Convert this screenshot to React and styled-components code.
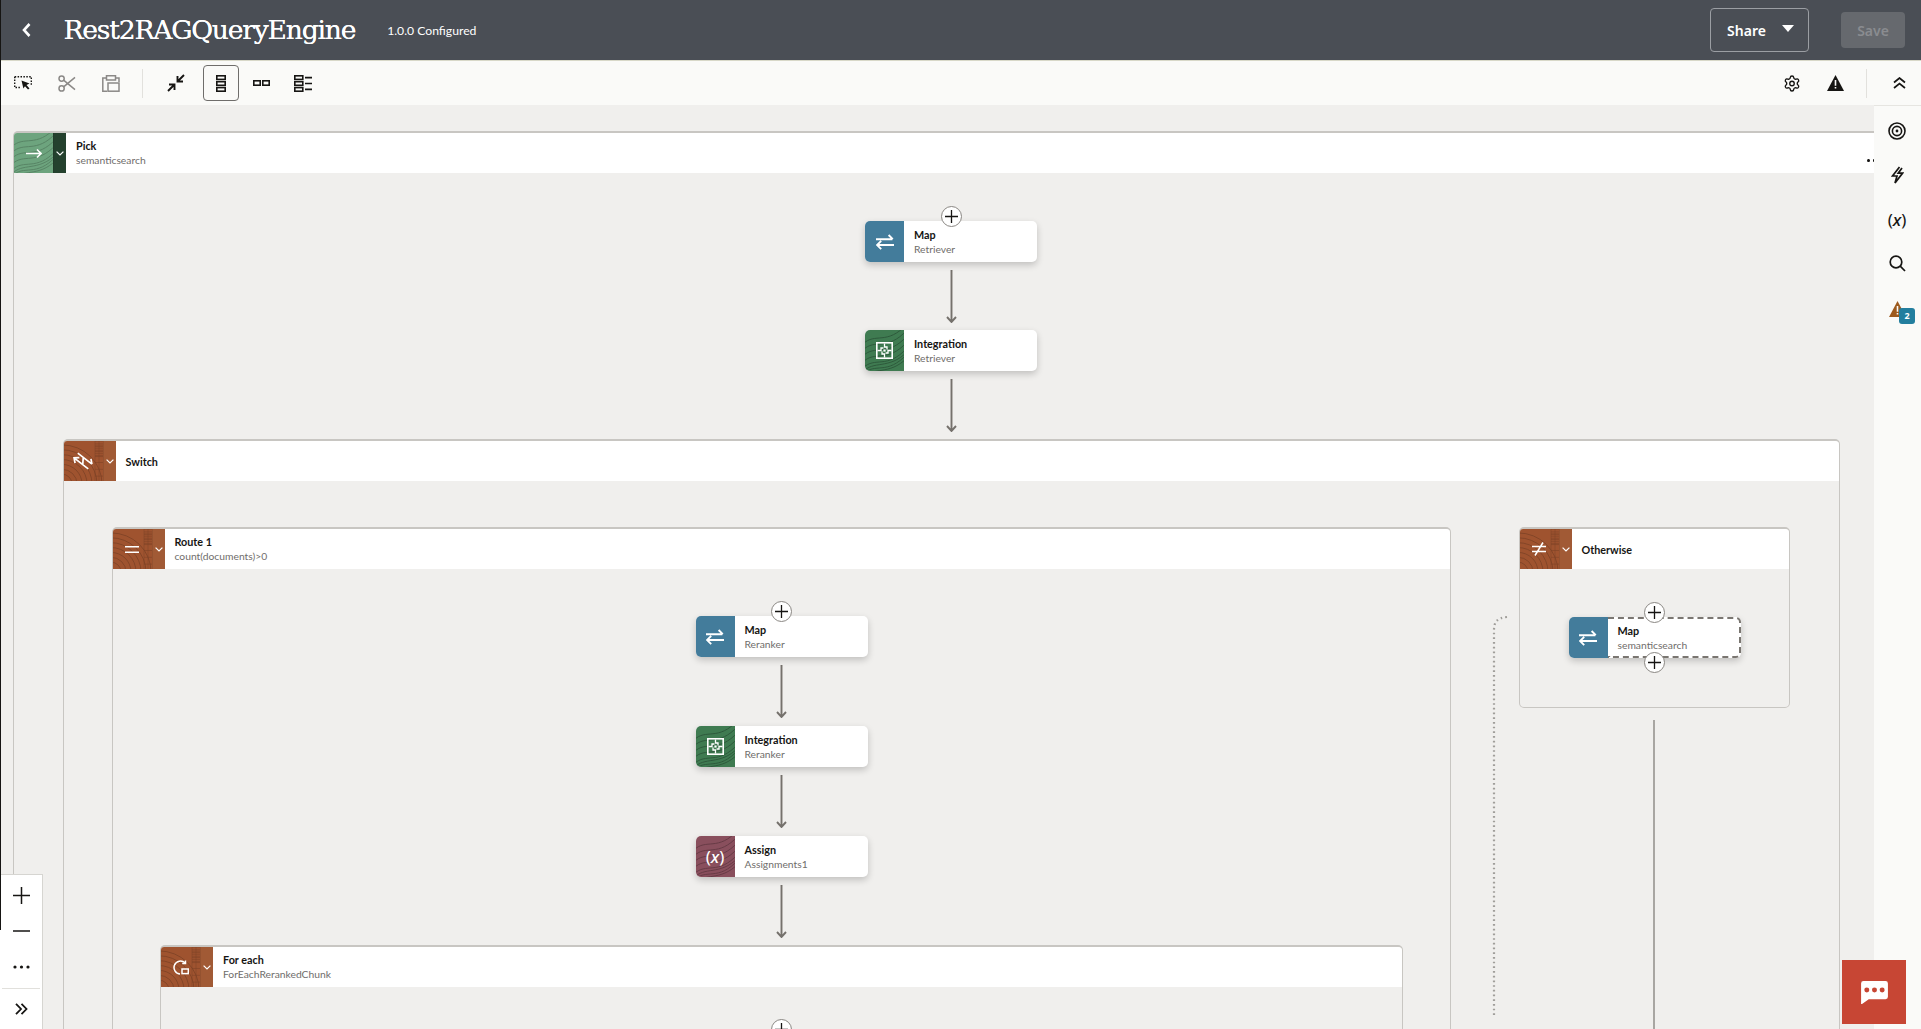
import React from "react";
import styled, { createGlobalStyle } from "styled-components";
import { Settings } from "lucide-react";

const Global = createGlobalStyle`
  html, body { margin: 0; padding: 0; height: 100%; overflow: hidden; background: #f0efed; }
  * { box-sizing: border-box; }
  #root { height: 100%; }
`;

const Page = styled.div`
  position: relative; width: 100%; height: 1029px; overflow: hidden;
  display: flex; flex-direction: column;
  font-family: "Noto Sans", "Open Sans", sans-serif; color: #161513;
  &::before { content: ""; position: absolute; z-index: 9; left: 0; top: 0; width: 1px; height: 930px; background: #161513; }
`;
const Header = styled.header`
  flex: none; height: 61px; background: #4a4e55; display: flex; align-items: center;
  padding: 0 16px 0 22px; color: #fff; border-bottom: 1px solid #d8d8c8;
`;
const BackButton = styled.span`display: flex; width: 41.5px; color: #fff;`;
const Title = styled.h1`
  margin: 0; font: 400 26.6px "DejaVu Serif", "Liberation Serif", serif; letter-spacing: -1.22px; line-height: 60px; text-shadow: 0 0 .4px #fff;
`;
const Version = styled.span`font: 400 12.2px "Lato", sans-serif; margin-left: 32px; padding-top: 1px;`;
const Spacer = styled.div`flex: 1;`;
const ShareButton = styled.button`
  width: 99px; height: 44px; border: 1px solid #9b9ea3; border-radius: 4px; background: transparent; color: #fff;
  font: 600 14px "Noto Sans", sans-serif; display: flex; align-items: center; justify-content: center; gap: 16px; padding: 0 0 0 2px;
`;
const Caret = styled.i`width: 0; height: 0; border-left: 6.5px solid transparent; border-right: 6.5px solid transparent; border-top: 7px solid #fff; margin-top: -3px;`;
const SaveButton = styled.button`
  width: 64px; height: 36px; margin-left: 32px; border: 0; border-radius: 4px; background: #66696e; color: #8a8c90;
  font: 600 14px "Noto Sans", sans-serif;
`;
const Toolbar = styled.div`
  flex: none; height: 44px; background: #fafaf8; display: flex; align-items: center; padding: 0 0 0 14px;
`;
const ToolIcon = styled.span`
  display: flex; align-items: center; justify-content: center; flex: none; width: ${p => p.$w || 44}px; height: 36px;
  margin: ${p => p.$m || "0"};
  color: ${p => p.$muted ? "#8b8987" : "#161513"};
  ${p => p.$active && "border: 1px solid #6f6d6b; border-radius: 4px;"}
`;
const ToolDivider = styled.span`flex: none; width: 1px; height: 29px; background: #e2e1dd; margin: ${p => p.$m};`;
const Canvas = styled.main`flex: 1; min-height: 0; position: relative; overflow: hidden; background: #f0efed; padding: 26px 0 0 13px;`;
const Scope = styled.section`
  position: relative; flex: none; width: ${p => p.$w}px; background: #f0efed;
  border: 1px solid #c8c6c2; border-width: 2px 1px 1px 1px; border-radius: 5px 5px ${p => p.$closed ? "5px 5px" : "0 0"};
  ${p => !p.$closed && "border-bottom: 0;"}
`;
const ScopeHead = styled.div`display: flex; align-items: stretch; height: 40px; background: #fff; border-radius: 4px 4px 0 0;`;
const ScopeTile = styled.span`
  position: relative; overflow: hidden; flex: none; width: 39px; display: flex; align-items: center; justify-content: center;
  background: ${p => p.$c}; color: #fff; border-radius: 3px 0 0 0;
`;
const ScopeToggle = styled.span`
  flex: none; width: 13px; display: flex; align-items: center; justify-content: center; color: #fff; background: ${p => p.$c};
  border-left: 1px solid rgba(0,0,0,.08);
`;
const ScopeText = styled.div`
  display: flex; flex-direction: column; justify-content: center; padding-left: 10px;
`;
const Name = styled.b`font: 700 10.8px/15px "Lato", sans-serif; color: #161513;`;
const Sub = styled.span`font: 400 10.3px/15px "Lato", sans-serif; color: #6f6d6b;`;
const ScopeBody = styled.div`
  position: relative; display: flex; flex-direction: ${p => p.$row ? "row" : "column"};
  align-items: ${p => p.$row ? "flex-start" : "center"}; gap: ${p => p.$gap || 0}px; padding: ${p => p.$pad};
`;
const Node = styled.article`
  position: relative; flex: none; width: 172px; height: 41px; background: #fff; border-radius: 5px; display: flex; align-items: stretch;
  box-shadow: 0 3px 7px rgba(0,0,0,.2);
`;
const NodeTile = styled.span`
  position: relative; overflow: hidden; flex: none; width: 39px; display: flex; align-items: center; justify-content: center; color: #fff;
  background: ${p => p.$c}; border-radius: 5px 0 0 5px;
`;
const NodeText = styled.div`
  flex: 1; display: flex; flex-direction: column; justify-content: center; padding-left: 10px;
  ${p => p.$selected && "border: 2px dashed #7a7671; border-left: 0; border-radius: 0 5px 5px 0;"}
`;
const AddButton = styled.span`
  position: absolute; z-index: 2; left: 50%; ${p => p.$bottom ? "bottom: -15px" : "top: -15.5px"}; margin-left: -10.5px; width: 21px; height: 21px; border-radius: 50%;
  background: #fff; border: 1px solid #8a8783; display: flex; align-items: center; justify-content: center; color: #161513;
`;
const Arrow = styled.svg`display: block; flex: none; margin: ${p => p.$m || "8px 0"}; color: #75716c;`;
const TileIcon = styled.svg`position: relative; display: block;`;
const AssignGlyph = styled.span`position: relative; font: 400 17px "Noto Sans", sans-serif; color: #fff; i { font-weight: 500; }`;
const Texture = styled.svg`position: absolute; inset: 0; width: 100%; height: 100%; opacity: ${p => p.$o || .22}; pointer-events: none;`;
const Column = styled.div`display: flex; flex-direction: column; align-items: center; flex: none;`;
const Trunk = styled.div`width: 2px; height: 400px; background: #a8a6a2; margin-top: 12px;`;
const DottedRoute = styled.svg`position: absolute; left: 1429px; top: 135px; overflow: visible;`;
const SideRail = styled.aside`
  position: absolute; z-index: 4; right: 0; top: 0; bottom: 0; width: 47px; background: #fafaf8; border-top: 1px solid #e6e5e1;
  display: flex; flex-direction: column; align-items: center; padding-top: 3px;
`;
const RailItem = styled.span`
  position: relative; width: 100%; height: 44px; display: flex; align-items: center; justify-content: center; flex: none; color: #161513;
  font: 400 17px "Noto Sans", sans-serif; padding-right: 1px; margin-top: ${p => p.$mt || 0}px; i { font-weight: 500; }
`;
const Badge = styled.span`
  position: absolute; right: 6px; top: 21px; min-width: 16px; height: 16px; border-radius: 3px; background: #227e9e; color: #fff;
  font: 700 9px/16px "Noto Sans", sans-serif; text-align: center;
`;
const EdgeDots = styled.span`
  position: absolute; z-index: 3; left: 1867px; top: 54px; width: 8px; height: 3px; display: flex; gap: 3px;
  &::before, &::after { content: ""; width: 3px; height: 3px; border-radius: 50%; background: #161513; }
`;
const ZoomPanel = styled.div`
  position: absolute; z-index: 5; left: 0; bottom: 0; width: 43px; height: 155px; background: #fff; border: 1px solid #d6d5d1; border-width: 1px 1px 0 0;
  display: flex; flex-direction: column; align-items: center; padding-top: 2px;
`;
const ZoomItem = styled.span`display: flex; align-items: center; justify-content: center; height: 36px; width: 100%; color: #161513; flex: none;`;
const ZoomRule = styled.span`width: 38px; height: 1px; background: #e1e0dc; margin: 3px 0 2px; flex: none;`;
const ChatButton = styled.div`
  position: absolute; z-index: 6; right: 15px; bottom: 5px; width: 64px; height: 64px;
  background: #c74634; display: flex; align-items: center; justify-content: center;
`;

const Wood = () => (
  <Texture viewBox="0 0 39 41" preserveAspectRatio="none" fill="none" stroke="#000" strokeWidth=".8">
    {[4, 9, 14, 19, 24, 29, 34].map(r => <circle key={r} cx="-2" cy="44" r={r + 6} />)}
    {[0, 5, 10].map(y => <path key={y} d={`M31 ${y}h8M31 ${y + 3}h8M31 ${y + 6}h8`} opacity=".7" />)}
    <path d="M31 0V41M35 0V41" opacity=".6" />
    {[15, 22, 29, 36].map(y => <path key={y} d={`M31 ${y}h8`} opacity=".7" />)}
  </Texture>
);
const Grain = ({ o, s = "#000" }) => (
  <Texture $o={o} viewBox="0 0 39 41" preserveAspectRatio="none" fill="none" stroke={s} strokeWidth=".9">
    {[0, 6, 12, 18, 24, 30].map(y => <path key={y} d={`M-2 ${y + 14}C10 ${y + 2} 22 ${y + 16} 42 ${y - 6}`} />)}
    {[36, 42].map(y => <path key={y} d={`M-2 ${y + 6}C8 ${y - 6} 24 ${y + 4} 42 ${y - 14}`} />)}
  </Texture>
);

const MapIcon = () => (
  <TileIcon width="18" height="16" viewBox="0 0 18 16" fill="none" stroke="#fff" strokeWidth="1.9">
    <path d="M0 5.2H16.4M12.6 1L16.8 5.2M0.8 11H18M5.2 6.8L1 11L5.2 15.2" />
  </TileIcon>
);
const IntegrationIcon = () => (
  <TileIcon width="17" height="17" viewBox="0 0 17 17" fill="none" stroke="#fff">
    <rect x=".8" y=".8" width="15.4" height="15.4" strokeWidth="1.6" />
    <path d="M8.5 1.5V5H11V7.4M15.5 8.5H12V11H9.6M8.5 15.5V12H6V9.6M1.5 8.5H5V6H7.4" strokeWidth="1.3" />
    <rect x="7.4" y="7.4" width="2.2" height="2.2" fill="#fff" stroke="none" />
  </TileIcon>
);
const Plus = () => (
  <svg width="13" height="13" viewBox="0 0 13 13" stroke="currentColor" strokeWidth="1.3"><path d="M6.5 0V13M0 6.5H13" /></svg>
);
const DownArrow = ({ m }) => (
  <Arrow $m={m} width="11" height="53" viewBox="0 0 11 53" fill="none" stroke="currentColor" strokeWidth="1.9">
    <path d="M5.5 0V52M1 47L5.5 52L10 47" />
  </Arrow>
);
const Chevron = () => (
  <svg width="8" height="5" viewBox="0 0 8 5" fill="none" stroke="currentColor" strokeWidth="1.2"><path d="M.6 .6L4 4L7.4 .6" /></svg>
);

const BLUE = "#437c9b", GREEN = "#3f7b52", PURPLE = "#8a4f5e", RUST = "#9f5430", PICK = "#6da57e";

function WorkNode({ tile, name, sub, kind, selected, addBottom, add }) {
  return (
    <Node>
      <NodeTile $c={tile}>
        {kind === "integration" && <Grain o={.3} />}
        {kind === "assign" && <Grain o={.28} />}
        {kind === "map" && <MapIcon />}
        {kind === "integration" && <IntegrationIcon />}
        {kind === "assign" && <AssignGlyph>(<i>x</i>)</AssignGlyph>}
      </NodeTile>
      <NodeText $selected={selected}>{name && <Name>{name}</Name>}{sub && <Sub>{sub}</Sub>}</NodeText>
      {add && <AddButton><Plus /></AddButton>}
      {addBottom && <AddButton $bottom><Plus /></AddButton>}
    </Node>
  );
}

function ScopeHeader({ icon, name, sub, tile = RUST, toggle = "#a15a35", wood = true }) {
  return (
    <ScopeHead>
      <ScopeTile $c={tile}>{wood ? <Wood /> : <Grain o={.22} />}{icon}</ScopeTile>
      <ScopeToggle $c={toggle}><Chevron /></ScopeToggle>
      <ScopeText><Name>{name}</Name>{sub && <Sub>{sub}</Sub>}</ScopeText>
    </ScopeHead>
  );
}

export default function App() {
  return (
    <Page>
      <Global />
      <Header>
        <BackButton><svg width="9" height="14" viewBox="0 0 9 14" fill="none" stroke="#fff" strokeWidth="2.6"><path d="M7.5 1L2 7L7.5 13" /></svg></BackButton>
        <Title>Rest2RAGQueryEngine</Title>
        <Version>1.0.0 Configured</Version>
        <Spacer />
        <ShareButton>Share<Caret /></ShareButton>
        <SaveButton>Save</SaveButton>
      </Header>
      <Toolbar>
        <ToolIcon $w={18}>
          <svg width="18" height="14" viewBox="0 0 18 14" fill="none"><path d="M.7 .7H17.3V10M.7 .7V11.5H6" stroke="#161513" strokeWidth="1.4" strokeDasharray="1.5 1.4" /><path d="M7.5 4.5L15.5 7.5L12.5 9L15.5 12.4L14 13.6L11 10.2L9.4 12.6Z" fill="#161513" /></svg>
        </ToolIcon>
        <ToolIcon $muted $m="0 0 0 26px" $w={18}>
          <svg width="18" height="17" viewBox="0 0 18 17" fill="none" stroke="currentColor" strokeWidth="1.5"><circle cx="3.6" cy="3.6" r="2.6" /><circle cx="3.6" cy="13.4" r="2.6" /><path d="M5.6 5.2L17 14.6M5.6 11.8L17 2.4" /></svg>
        </ToolIcon>
        <ToolIcon $muted $m="0 0 0 26px" $w={18}>
          <svg width="18" height="17" viewBox="0 0 18 17" fill="none" stroke="currentColor" strokeWidth="1.5"><path d="M4.5 3H.8V16.2H5M13.5 3H17V7" /><path d="M4.5 3V.8H13.5V5H4.5Z" /><rect x="6" y="8" width="11" height="8.2" /></svg>
        </ToolIcon>
        <ToolDivider $m="0 24px 0 22px" />
        <ToolIcon $w={18}>
          <svg width="18" height="18" viewBox="0 0 18 18" fill="none" stroke="#161513" strokeWidth="1.9"><path d="M17 1L10.5 7.5M10.5 2V7.5H16" /><path d="M1 17L7.5 10.5M2 10.5H7.5V16" /></svg>
        </ToolIcon>
        <ToolIcon $active $w={36} $m="0 0 0 18px">
          <svg width="10" height="17" viewBox="0 0 10 17" fill="none" stroke="#161513" strokeWidth="1.6"><rect x=".8" y=".8" width="8.4" height="3.6" /><rect x=".8" y="6.7" width="8.4" height="3.6" /><rect x=".8" y="12.6" width="8.4" height="3.6" /></svg>
        </ToolIcon>
        <ToolIcon $w={17} $m="0 0 0 14px">
          <svg width="17" height="6" viewBox="0 0 17 6" fill="none" stroke="#161513" strokeWidth="1.6"><rect x=".8" y=".8" width="6.4" height="4.4" /><rect x="9.8" y=".8" width="6.4" height="4.4" /></svg>
        </ToolIcon>
        <ToolIcon $w={18} $m="0 0 0 24px">
          <svg width="18" height="17" viewBox="0 0 18 17" fill="none" stroke="#161513" strokeWidth="1.6"><rect x=".8" y=".8" width="8" height="3.6" /><rect x=".8" y="6.7" width="8" height="3.6" /><rect x=".8" y="12.6" width="8" height="3.6" /><path d="M11 2.6H18M11 8.5H18M11 14.4H18" /></svg>
        </ToolIcon>
        <Spacer />
        <ToolIcon $w={18} $m="0 26px 0 0">
          <Settings size={21} strokeWidth={1.8} color="#161513" />
        </ToolIcon>
        <ToolIcon $w={17} $m="0 22px 0 0">
          <svg width="17" height="16" viewBox="0 0 17 16"><path d="M8.5 0L17 16H0Z" fill="#161513" /><path d="M7.7 5H9.3V10.8H7.7ZM7.7 12H9.3V13.6H7.7Z" fill="#fafaf8" /></svg>
        </ToolIcon>
        <ToolDivider $m="0" />
        <ToolIcon $w={42} $m="0 1px 0 11px">
          <svg width="13" height="12" viewBox="0 0 13 12" fill="none" stroke="#161513" strokeWidth="1.7"><path d="M1 5.5L6.5 1L12 5.5M1 11L6.5 6.5L12 11" /></svg>
        </ToolIcon>
      </Toolbar>
      <Canvas>
        <Scope $w={1876}>
          <ScopeHeader tile={PICK} toggle="#24412e" wood={false} name="Pick" sub="semanticsearch" icon={
            <TileIcon width="16" height="11" viewBox="0 0 16 11" fill="none" stroke="#fff" strokeWidth="1.6"><path d="M0 5.5H15M11 1.5L15 5.5L11 9.5" /></TileIcon>
          } />
          <ScopeBody $pad="48px 49px 0">
            <WorkNode add tile={BLUE} kind="map" name="Map" sub="Retriever" />
            <DownArrow m="8px 0 7px" />
            <WorkNode tile={GREEN} kind="integration" name="Integration" sub="Retriever" />
            <DownArrow m="8px 0 7px" />
            <Scope $w={1777}>
              <ScopeHeader name="Switch" icon={
                <TileIcon width="20" height="20" viewBox="0 0 20 20" fill="none" stroke="#fff" strokeWidth="1.7"><g transform="rotate(38 10 10)"><path d="M1 7H19M15 3.5L19 7M1 13H19M5 9.5L1 13L5 16.5M8 7L12 13" /></g></TileIcon>
              } />
              <ScopeBody $row $gap={68} $pad="46px 49px 0 48px">
                <DottedRoute width="16" height="400" fill="none" stroke="#a09e9a" strokeWidth="2.2" strokeDasharray="1.7 3"><path d="M14 1C4 2 1 6 1 14V400" /></DottedRoute>
                <Scope $w={1339}>
                  <ScopeHeader name="Route 1" sub="count(documents)>0" icon={
                    <TileIcon width="14" height="7" viewBox="0 0 14 7" stroke="#fff" strokeWidth="1.5"><path d="M0 .8H14M0 6.2H14" /></TileIcon>
                  } />
                  <ScopeBody $pad="47px 48px 0 49px">
                    <WorkNode add tile={BLUE} kind="map" name="Map" sub="Reranker" />
                    <DownArrow m="8px 0 8px" />
                    <WorkNode tile={GREEN} kind="integration" name="Integration" sub="Reranker" />
                    <DownArrow m="8px 0 8px" />
                    <WorkNode tile={PURPLE} kind="assign" name="Assign" sub="Assignments1" />
                    <DownArrow m="8px 0 7px" />
                    <Scope $w={1243}>
                      <ScopeHeader name="For each" sub="ForEachRerankedChunk" icon={
                        <TileIcon width="17" height="15" viewBox="0 0 17 15" fill="none" stroke="#fff" strokeWidth="1.5"><path d="M13 2.8A6.5 6.5 0 1 0 8 14" /><path d="M13.5 .5V3.6H10.2" /><rect x="10" y="9" width="6.3" height="4.6" /></TileIcon>
                      } />
                      <ScopeBody $pad="47px 49px 0"><WorkNode add tile={BLUE} kind="map" /></ScopeBody>
                    </Scope>
                  </ScopeBody>
                </Scope>
                <Column>
                  <Scope $w={271} $closed>
                    <ScopeHeader name="Otherwise" icon={
                      <TileIcon width="14" height="14" viewBox="0 0 14 14" fill="none" stroke="#fff" strokeWidth="1.5"><path d="M0 4.5H14M0 9.5H14M11 .5L3 13.5" /></TileIcon>
                    } />
                    <ScopeBody $pad="48px 48px 49px 49px">
                      <WorkNode add addBottom selected tile={BLUE} kind="map" name="Map" sub="semanticsearch" />
                    </ScopeBody>
                  </Scope>
                  <Trunk />
                </Column>
              </ScopeBody>
            </Scope>
          </ScopeBody>
        </Scope>
        <EdgeDots />
        <SideRail>
          <RailItem><svg width="18" height="18" viewBox="0 0 18 18" fill="none" stroke="#161513" strokeWidth="1.6"><circle cx="9" cy="9" r="8" /><circle cx="9" cy="9" r="4.6" /><circle cx="9" cy="9" r="1.4" fill="#161513" stroke="none" /></svg></RailItem>
          <RailItem><svg width="13" height="18" viewBox="0 0 13 18" fill="none" stroke="#161513" strokeWidth="1.7"><path d="M8.5 1L1.5 10H6L4 17L11.5 7.2H7.2L11 2" /></svg></RailItem>
          <RailItem>(<i>x</i>)</RailItem>
          <RailItem><svg width="17" height="17" viewBox="0 0 17 17" fill="none" stroke="#161513" strokeWidth="1.7"><circle cx="7" cy="7" r="5.8" /><path d="M11.2 11.2L16 16" /></svg></RailItem>
          <RailItem $mt={2}>
            <svg width="17" height="16" viewBox="0 0 17 16"><path d="M8.5 0L17 16H0Z" fill="#9c5a1e" /><path d="M7.7 5H9.3V10.8H7.7ZM7.7 12H9.3V13.6H7.7Z" fill="#fafaf8" /></svg>
            <Badge>2</Badge>
          </RailItem>
        </SideRail>
        <ZoomPanel>
          <ZoomItem><svg width="17" height="17" viewBox="0 0 17 17" stroke="#161513" strokeWidth="1.5"><path d="M8.5 0V17M0 8.5H17" /></svg></ZoomItem>
          <ZoomItem><svg width="17" height="2" viewBox="0 0 17 2" stroke="#161513" strokeWidth="1.5"><path d="M0 1H17" /></svg></ZoomItem>
          <ZoomItem><svg width="17" height="4" viewBox="0 0 17 4" fill="#161513"><circle cx="2" cy="2" r="1.6" /><circle cx="8.5" cy="2" r="1.6" /><circle cx="15" cy="2" r="1.6" /></svg></ZoomItem>
          <ZoomRule />
          <ZoomItem><svg width="13" height="12" viewBox="0 0 13 12" fill="none" stroke="#161513" strokeWidth="1.8"><path d="M1 .8L6 6L1 11.2M6.5 .8L11.5 6L6.5 11.2" /></svg></ZoomItem>
        </ZoomPanel>
        <ChatButton>
          <svg width="27" height="23" viewBox="0 0 28 24"><path d="M2.5 0H25.5A2.5 2.5 0 0 1 28 2.5V16.5A2.5 2.5 0 0 1 25.5 19H8L1 24H0V2.5A2.5 2.5 0 0 1 2.5 0Z" fill="#fff" /><circle cx="6" cy="9.5" r="2.6" fill="#c74634" /><circle cx="14" cy="9.5" r="2.6" fill="#c74634" /><circle cx="22" cy="9.5" r="2.6" fill="#c74634" /></svg>
        </ChatButton>
      </Canvas>
    </Page>
  );
}
